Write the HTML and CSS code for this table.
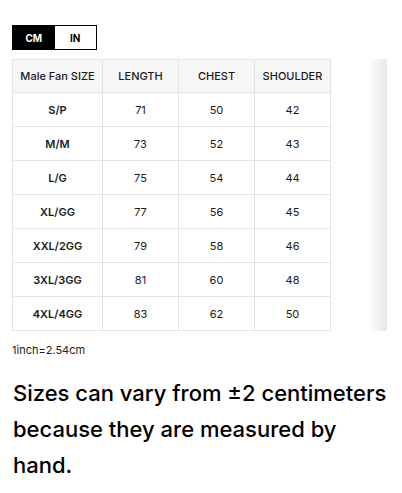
FILE: index.html
```html
<!DOCTYPE html>
<html>
<head>
<meta charset="utf-8">
<link rel="stylesheet" href="styles.css">
</head>
<body>
<div class="page">
  <div class="toggle">
    <span class="tog tog-active">CM</span>
    <span class="tog">IN</span>
  </div>
  <div class="scroller">
    <table class="sizes">
      <thead>
        <tr><th class="c-size">Male Fan SIZE</th><th>LENGTH</th><th>CHEST</th><th>SHOULDER</th></tr>
      </thead>
      <tbody>
        <tr><td class="sz">S/P</td><td>71</td><td>50</td><td>42</td></tr>
        <tr><td class="sz">M/M</td><td>73</td><td>52</td><td>43</td></tr>
        <tr><td class="sz">L/G</td><td>75</td><td>54</td><td>44</td></tr>
        <tr><td class="sz">XL/GG</td><td>77</td><td>56</td><td>45</td></tr>
        <tr><td class="sz">XXL/2GG</td><td>79</td><td>58</td><td>46</td></tr>
        <tr><td class="sz">3XL/3GG</td><td>81</td><td>60</td><td>48</td></tr>
        <tr><td class="sz">4XL/4GG</td><td>83</td><td>62</td><td>50</td></tr>
      </tbody>
    </table>
    <div class="shade"></div>
  </div>
  <p class="note">1inch=2.54cm</p>
  <p class="disclaimer">Sizes can vary from ±2 centimeters because they are measured by hand.</p>
</div>
</body>
</html>
```
FILE: styles.css
```css
* { box-sizing: border-box; }
html, body { margin: 0; padding: 0; background: #fff; }
body { font-family: Inter, "Noto Sans", sans-serif; color: #111; }
.page { padding: 25px 12px 0 12px; }
.toggle { display: flex; width: 85px; height: 25px; border: 1px solid #000; }
.tog { flex: 1; display: flex; align-items: center; justify-content: center; font-size: 10px; font-weight: 700; color: #000; }
.tog-active { background: #000; color: #fff; }
.scroller { position: relative; width: 375px; margin-top: 9px; }
.sizes { border-collapse: collapse; font-size: 11px; color: #1a1a1a; }
.sizes th, .sizes td { border: 1px solid #e6e4e0; height: 34px; padding: 0; text-align: center; }
.sizes th { background: #f6f6f6; font-weight: 500; height: 33px; width: 76px; }
.sizes th.c-size { width: 90px; }
.sizes td { font-weight: 400; }
.sizes td.sz { font-weight: 600; }
.shade { position: absolute; top: 0; right: 0; bottom: 0; width: 20px; background: linear-gradient(to right, rgba(0,0,0,0), rgba(0,0,0,0.09)); }
.note { margin: 12px 0 0 0; font-size: 11px; color: #222; line-height: 14px; }
.disclaimer { margin: 18px 0 0 1px; font-size: 22px; font-weight: 500; line-height: 36px; color: #000; }
```
